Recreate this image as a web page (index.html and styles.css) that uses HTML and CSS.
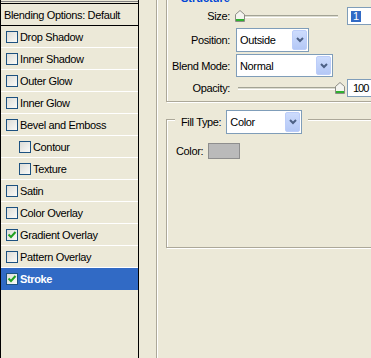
FILE: index.html
```html
<!DOCTYPE html>
<html lang="en">
<head>
    <meta charset="UTF-8">
    <meta name="viewport" content="width=device-width, initial-scale=1.0">
    <title>Layer Style - Stroke</title>
    <link rel="stylesheet" href="styles.css">
</head>
<body>
    <div class="dialog">
        <ul class="styles-list">
            <li class="list-cut"></li>
            <li class="list-head">Blending Options: Default</li>
            <li class="style-row"><span class="check"></span>Drop Shadow</li>
            <li class="style-row"><span class="check"></span>Inner Shadow</li>
            <li class="style-row"><span class="check"></span>Outer Glow</li>
            <li class="style-row"><span class="check"></span>Inner Glow</li>
            <li class="style-row"><span class="check"></span>Bevel and Emboss</li>
            <li class="style-row sub"><span class="check"></span>Contour</li>
            <li class="style-row sub"><span class="check"></span>Texture</li>
            <li class="style-row"><span class="check"></span>Satin</li>
            <li class="style-row"><span class="check"></span>Color Overlay</li>
            <li class="style-row"><span class="check on"><svg width="10" height="10" viewBox="0 0 10 10"><path d="M1.5 4.5 L4 7 L8.5 2" fill="none" stroke="#21a121" stroke-width="2"/></svg></span>Gradient Overlay</li>
            <li class="style-row"><span class="check"></span>Pattern Overlay</li>
            <li class="style-row selected"><span class="check on"><svg width="10" height="10" viewBox="0 0 10 10"><path d="M1.5 4.5 L4 7 L8.5 2" fill="none" stroke="#21a121" stroke-width="2"/></svg></span>Stroke</li>
        </ul>

        <div class="panel">
            <div class="group structure">
                <div class="group-head"><span class="group-title">Structure</span></div>

                <div class="field-row size-row">
                    <span class="field-label">Size:</span>
                    <div class="slider">
                        <div class="track"></div>
                        <svg class="thumb" style="left: -1px" width="10" height="12" viewBox="0 0 10 12"><path d="M0.5 11.5V4.5L5 0.5L9.5 4.5V11.5Z" fill="#f4f4ef" stroke="#8c8c84"/><path d="M1 10H9" stroke="#2fb12f" stroke-width="2"/></svg>
                    </div>
                    <div class="num-box"><span class="sel">1</span></div>
                </div>

                <div class="field-row combo-row">
                    <span class="field-label">Position:</span>
                    <div class="combo position-combo">
                        <span>Outside</span>
                        <span class="combo-btn"><svg width="8" height="6" viewBox="0 0 8 6"><path d="M1 1 L4 4 L7 1" fill="none" stroke="#4d6185" stroke-width="2"/></svg></span>
                    </div>
                </div>

                <div class="field-row combo-row blend-row">
                    <span class="field-label">Blend Mode:</span>
                    <div class="combo blend-combo">
                        <span>Normal</span>
                        <span class="combo-btn"><svg width="8" height="6" viewBox="0 0 8 6"><path d="M1 1 L4 4 L7 1" fill="none" stroke="#4d6185" stroke-width="2"/></svg></span>
                    </div>
                </div>

                <div class="field-row size-row opacity-row">
                    <span class="field-label">Opacity:</span>
                    <div class="slider">
                        <div class="track"></div>
                        <svg class="thumb" style="left: 99px" width="10" height="12" viewBox="0 0 10 12"><path d="M0.5 11.5V4.5L5 0.5L9.5 4.5V11.5Z" fill="#f4f4ef" stroke="#8c8c84"/><path d="M1 10H9" stroke="#2fb12f" stroke-width="2"/></svg>
                    </div>
                    <div class="num-box wide">100</div>
                </div>
            </div>

            <div class="group fill">
                <div class="group-head">
                    <span>Fill Type:</span>
                    <div class="combo fill-combo">
                        <span>Color</span>
                        <span class="combo-btn"><svg width="8" height="6" viewBox="0 0 8 6"><path d="M1 1 L4 4 L7 1" fill="none" stroke="#4d6185" stroke-width="2"/></svg></span>
                    </div>
                </div>
                <div class="color-row">
                    <span>Color:</span>
                    <span class="swatch"></span>
                </div>
            </div>
        </div>
    </div>
</body>
</html>
```

FILE: styles.css
```css
body {
    margin: 0;
    background: #ece9d8;
    font-family: "Liberation Sans", Arial, sans-serif;
    font-size: 11px;
    letter-spacing: -0.35px;
    color: #000;
    overflow: hidden;
}
.dialog {
    display: flex;
    height: 100vh;
}

/* styles list on the left */
.styles-list {
    list-style: none;
    margin: 0;
    padding: 0;
    width: 139px;
    flex: none;
    box-sizing: border-box;
    border-left: 1px solid #000;
    border-right: 1px solid #000;
}
.list-cut {
    height: 1px;
    margin-top: 1px;
    background: #808080;
}
.list-head {
    margin-top: 1px;
    height: 21px;
    border-top: 1px solid #000;
    border-bottom: 1px solid #000;
    padding-left: 3px;
    display: flex;
    align-items: center;
}
.style-row {
    height: 21px;
    border-bottom: 1px solid #fff;
    padding-left: 5px;
    display: flex;
    align-items: center;
}
.style-row.sub {
    padding-left: 18px;
}
.style-row.selected {
    background: #316ac5;
    color: #fff;
    font-weight: bold;
    border-bottom-color: #316ac5;
}
.check {
    width: 12px;
    height: 12px;
    box-sizing: border-box;
    border: 1px solid #1c5180;
    background: linear-gradient(135deg, #dcdcd7, #fafaf8);
    margin-right: 2px;
    display: flex;
    align-items: center;
    justify-content: center;
}
.check svg {
    display: block;
}

/* right panel */
.panel {
    margin-left: 17px;
    padding-left: 9px;
    border-left: 1px solid #aca899;
    box-shadow: inset 1px 0 #fff;
    flex: 1;
}
.group {
    width: 260px;
    border: 1px solid #aca899;
    box-shadow: inset 1px 1px 0 #fff, 1px 1px 0 #fff;
}
.group-head {
    display: flex;
    align-items: center;
    gap: 5px;
    width: fit-content;
    margin-left: 8px;
    padding: 0 6px;
    background: #ece9d8;
}
.group-title {
    color: #0046d5;
    font-weight: bold;
    letter-spacing: 0;
}
.structure {
    margin-top: -2px;
    padding-bottom: 4px;
}
.structure .group-head {
    margin-top: -7px;
    margin-bottom: 2px;
    line-height: 13px;
}
.field-row {
    display: flex;
    align-items: center;
}
.field-label {
    width: 63px;
    margin-right: 6px;
    text-align: right;
    flex: none;
}
.size-row {
    height: 18px;
}
.combo-row {
    margin-top: 3px;
    height: 24px;
}
.blend-row {
    margin-top: 2px;
    height: 23px;
}
.opacity-row {
    margin-top: 2px;
}

.slider {
    position: relative;
    width: 104px;
    height: 18px;
    margin-right: 7px;
}
.track {
    margin: 8px 2px 0;
    height: 1px;
    border-top: 1px solid #a3a395;
    border-bottom: 1px solid #fff;
    background: #dcdcd0;
}
.thumb {
    position: absolute;
    top: 3px;
}
.num-box {
    width: 40px;
    height: 18px;
    box-sizing: border-box;
    border: 1px solid #7f9db9;
    background: #fff;
    padding-left: 3px;
    display: flex;
    align-items: center;
    flex: none;
}
.num-box.wide {
    padding-left: 5px;
    letter-spacing: -1px;
}
.sel {
    background: #316ac5;
    color: #fff;
    padding: 0 2px;
    line-height: 11px;
}

.combo {
    display: flex;
    align-items: center;
    justify-content: space-between;
    height: 24px;
    box-sizing: border-box;
    border: 1px solid #7f9db9;
    background: #fff;
    padding: 1px 1px 1px 3px;
}
.combo-row .combo {
    height: 100%;
}
.position-combo {
    width: 73px;
}
.blend-combo {
    width: 97px;
}
.fill-combo {
    width: 76px;
}
.combo-btn {
    width: 15px;
    height: 100%;
    box-sizing: border-box;
    border: 1px solid #bccdf9;
    border-radius: 2px;
    background: linear-gradient(#cddcfd, #b4c8f6);
    display: flex;
    align-items: center;
    justify-content: center;
}
.combo-btn svg {
    display: block;
}

.fill {
    margin-top: 17px;
    height: 129px;
    box-sizing: border-box;
}
.fill .group-head {
    margin-top: -10px;
}
.color-row {
    display: flex;
    align-items: center;
    gap: 5px;
    margin: 9px 0 0 9px;
}
.swatch {
    width: 32px;
    height: 16px;
    box-sizing: border-box;
    border: 1px solid #8e8e8e;
    background: #bababa;
}
```
